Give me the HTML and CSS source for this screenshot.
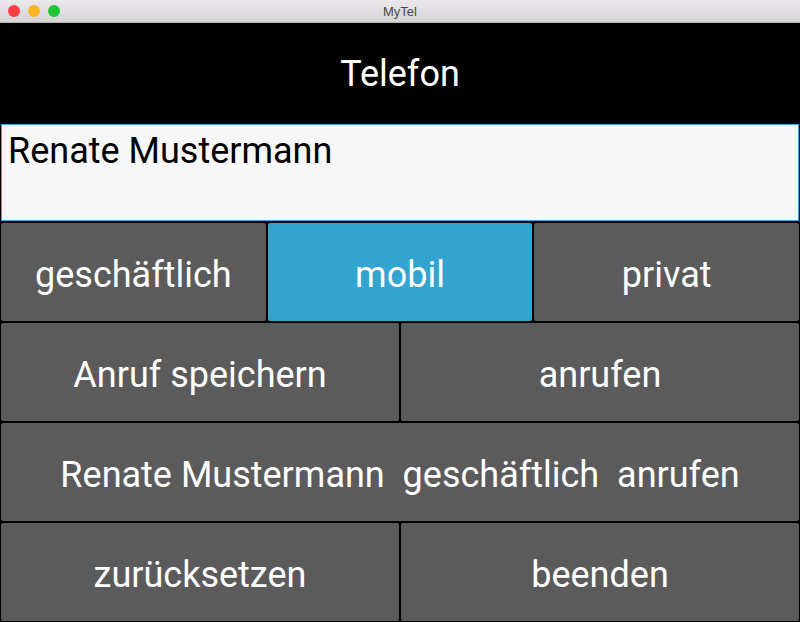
FILE: index.html
```
<!DOCTYPE html>
<html lang="de">
<head>
    <meta charset="UTF-8">
    <title>MyTel</title>
    <link rel="stylesheet" href="styles.css">
</head>
<body>
    <div class="window">
        <!-- macOS title bar -->
        <div class="titlebar">
            <div class="lights">
                <span class="light red"></span>
                <span class="light yellow"></span>
                <span class="light green"></span>
            </div>
            <span class="title">MyTel</span>
        </div>

        <div class="header">Telefon</div>

        <div class="name-field">
            <div class="name-input">Renate Mustermann</div>
        </div>

        <!-- Button rows -->
        <div class="btn-row three">
            <button class="btn">geschäftlich</button>
            <button class="btn active">mobil</button>
            <button class="btn">privat</button>
        </div>
        <div class="btn-row two">
            <button class="btn">Anruf speichern</button>
            <button class="btn">anrufen</button>
        </div>
        <div class="btn-row one">
            <button class="btn status">Renate Mustermann  geschäftlich  anrufen</button>
        </div>
        <div class="btn-row two">
            <button class="btn">zurücksetzen</button>
            <button class="btn">beenden</button>
        </div>
    </div>
</body>
</html>
```

FILE: styles.css
```
body {
    margin: 0;
    font-family: Roboto, "Liberation Sans", sans-serif;
    background-color: #000;
}

.window {
    width: 800px;
    height: 622px;
    display: flex;
    flex-direction: column;
    background-color: #000;
    overflow: hidden;
}

.titlebar {
    height: 22px;
    flex-shrink: 0;
    display: flex;
    align-items: center;
    justify-content: center;
    position: relative;
    background: linear-gradient(to bottom, #ebe9eb, #d5d3d5);
    border-bottom: 1px solid #b4b2b4;
}

.lights {
    position: absolute;
    left: 8px;
    top: 5px;
    display: flex;
    gap: 8px;
}

.light {
    width: 12px;
    height: 12px;
    border-radius: 50%;
}

.light.red { background-color: #fc3d44; }
.light.yellow { background-color: #fdb524; }
.light.green { background-color: #1fc537; }

.title {
    font-family: "Helvetica Neue", "Liberation Sans", sans-serif;
    font-size: 13px;
    color: #4a4a4a;
}

.header {
    height: 101px;
    flex-shrink: 0;
    display: flex;
    align-items: center;
    justify-content: center;
    color: #fff;
    font-size: 36px;
}

.name-field {
    height: 98px;
    flex-shrink: 0;
    padding: 0 1px;
    box-sizing: border-box;
}

.name-input {
    height: 97px;
    box-sizing: border-box;
    border: 1px solid #3ba5d6;
    background-color: #f7f7f7;
    color: #000;
    font-size: 36px;
    padding: 5px 6px;
}

.btn-row {
    height: 100px;
    flex-shrink: 0;
    display: flex;
}

.btn {
    flex: 1;
    margin: 1px;
    border: none;
    border-radius: 2px;
    background-color: #5b5b5b;
    color: #fff;
    font-family: Roboto, "Liberation Sans", sans-serif;
    font-size: 36px;
    padding: 5px 0 0;
}

.btn.active {
    background-color: #32a4cf;
}

.btn.status {
    white-space: pre;
}
```
